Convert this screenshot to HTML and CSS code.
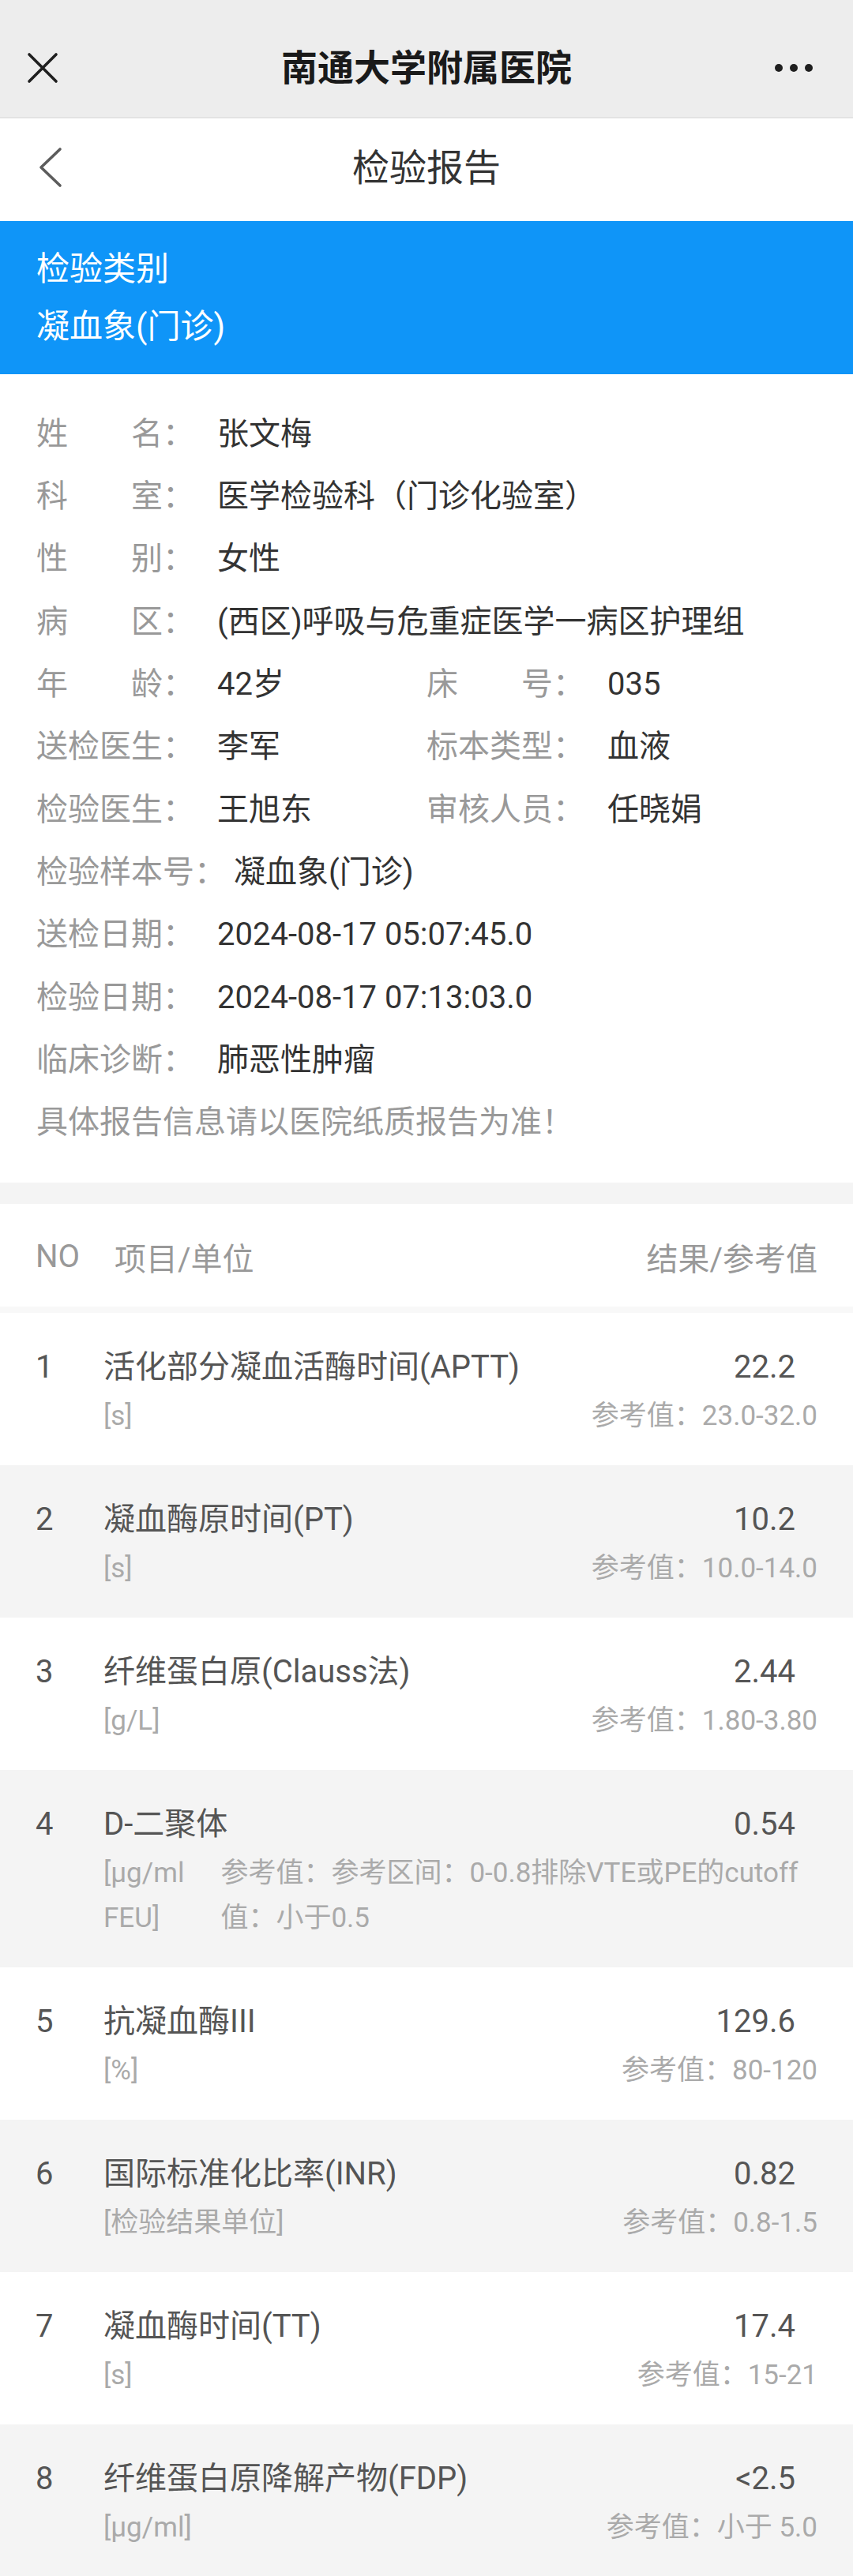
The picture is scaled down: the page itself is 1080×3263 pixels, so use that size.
FILE: index.html
```html
<!DOCTYPE html>
<html lang="zh-CN">
<head>
<meta charset="utf-8">
<title>检验报告</title>
<link rel="stylesheet" href="styles.css">
</head>
<body>
<header class="topbar">
  <span class="tb-left"><svg class="icon-close" width="40" height="40" viewBox="0 0 40 40"><path d="M3 3 L37 37 M37 3 L3 37"/></svg></span>
  <h1 class="tb-title">南通大学附属医院</h1>
  <span class="tb-right"><svg class="icon-more" width="50" height="12" viewBox="0 0 50 12"><circle cx="5" cy="6" r="5"/><circle cx="24" cy="6" r="5"/><circle cx="43" cy="6" r="5"/></svg></span>
</header>
<nav class="navbar">
  <span class="nav-back"><svg class="icon-back" width="30" height="52" viewBox="0 0 30 52"><polyline points="27,3 3,26 27,49"/></svg></span>
  <h2 class="nav-title">检验报告</h2>
  <span></span>
</nav>
<section class="category">
  <div>检验类别</div>
  <div>凝血象(门诊)</div>
</section>
<section class="info">
  <div class="info-row"><span class="lbl"><span class="just"><i>姓</i><i>名</i></span>：</span><span class="val">张文梅</span></div>
  <div class="info-row"><span class="lbl"><span class="just"><i>科</i><i>室</i></span>：</span><span class="val">医学检验科（门诊化验室）</span></div>
  <div class="info-row"><span class="lbl"><span class="just"><i>性</i><i>别</i></span>：</span><span class="val">女性</span></div>
  <div class="info-row"><span class="lbl"><span class="just"><i>病</i><i>区</i></span>：</span><span class="val">(西区)呼吸与危重症医学一病区护理组</span></div>
  <div class="info-row two">
    <div class="cell"><span class="lbl"><span class="just"><i>年</i><i>龄</i></span>：</span><span class="val">42岁</span></div>
    <div class="cell"><span class="lbl"><span class="just"><i>床</i><i>号</i></span>：</span><span class="val">035</span></div>
  </div>
  <div class="info-row two">
    <div class="cell"><span class="lbl">送检医生：</span><span class="val">李军</span></div>
    <div class="cell"><span class="lbl">标本类型：</span><span class="val">血液</span></div>
  </div>
  <div class="info-row two">
    <div class="cell"><span class="lbl">检验医生：</span><span class="val">王旭东</span></div>
    <div class="cell"><span class="lbl">审核人员：</span><span class="val">任晓娟</span></div>
  </div>
  <div class="info-row"><span class="lbl">检验样本号：</span><span class="val">凝血象(门诊)</span></div>
  <div class="info-row"><span class="lbl">送检日期：</span><span class="val">2024-08-17 05:07:45.0</span></div>
  <div class="info-row"><span class="lbl">检验日期：</span><span class="val">2024-08-17 07:13:03.0</span></div>
  <div class="info-row"><span class="lbl">临床诊断：</span><span class="val">肺恶性肿瘤</span></div>
  <div class="info-row note">具体报告信息请以医院纸质报告为准！</div>
</section>
<div class="sep"></div>
<section class="table">
  <div class="thead">
    <span class="th-no">NO</span>
    <span class="th-item">项目/单位</span>
    <span class="th-res">结果/参考值</span>
  </div>
  <div class="rows">
    <div class="trow">
      <div class="no">1</div>
      <div class="tbody">
        <div class="main"><span class="name">活化部分凝血活酶时间(APTT)</span><span class="result">22.2</span></div>
        <div class="sub"><span class="unit">[s]</span><span class="ref">参考值：23.0-32.0</span></div>
      </div>
    </div>
    <div class="trow">
      <div class="no">2</div>
      <div class="tbody">
        <div class="main"><span class="name">凝血酶原时间(PT)</span><span class="result">10.2</span></div>
        <div class="sub"><span class="unit">[s]</span><span class="ref">参考值：10.0-14.0</span></div>
      </div>
    </div>
    <div class="trow">
      <div class="no">3</div>
      <div class="tbody">
        <div class="main"><span class="name">纤维蛋白原(Clauss法)</span><span class="result">2.44</span></div>
        <div class="sub"><span class="unit">[g/L]</span><span class="ref">参考值：1.80-3.80</span></div>
      </div>
    </div>
    <div class="trow">
      <div class="no">4</div>
      <div class="tbody">
        <div class="main"><span class="name">D-二聚体</span><span class="result">0.54</span></div>
        <div class="sub wrap"><span class="unit">[μg/ml FEU]</span><span class="ref">参考值：参考区间：0-0.8排除VTE或PE的cutoff值：小于0.5</span></div>
      </div>
    </div>
    <div class="trow">
      <div class="no">5</div>
      <div class="tbody">
        <div class="main"><span class="name">抗凝血酶III</span><span class="result">129.6</span></div>
        <div class="sub"><span class="unit">[%]</span><span class="ref">参考值：80-120</span></div>
      </div>
    </div>
    <div class="trow">
      <div class="no">6</div>
      <div class="tbody">
        <div class="main"><span class="name">国际标准化比率(INR)</span><span class="result">0.82</span></div>
        <div class="sub"><span class="unit">[检验结果单位]</span><span class="ref">参考值：0.8-1.5</span></div>
      </div>
    </div>
    <div class="trow">
      <div class="no">7</div>
      <div class="tbody">
        <div class="main"><span class="name">凝血酶时间(TT)</span><span class="result">17.4</span></div>
        <div class="sub"><span class="unit">[s]</span><span class="ref">参考值：15-21</span></div>
      </div>
    </div>
    <div class="trow">
      <div class="no">8</div>
      <div class="tbody">
        <div class="main"><span class="name">纤维蛋白原降解产物(FDP)</span><span class="result">&lt;2.5</span></div>
        <div class="sub"><span class="unit">[μg/ml]</span><span class="ref">参考值：小于 5.0</span></div>
      </div>
    </div>
  </div>
</section>
</body>
</html>
```
FILE: styles.css
```css
* { box-sizing: border-box; margin: 0; padding: 0; }
html, body { background: #fff; }
body {
  width: 1080px;
  font-family: Roboto, "Noto Sans CJK SC", sans-serif;
  color: #333;
}
i { font-style: normal; }

/* top bar */
.topbar {
  display: grid;
  grid-template-columns: 1fr auto 1fr;
  align-items: center;
  height: 150px;
  padding-top: 24px;
  background: #ededed;
  border-bottom: 2px solid #e3e3e3;
}
.tb-left { display: flex; padding-left: 34px; }
.tb-title { font-size: 46px; font-weight: 700; color: #1a1a1a; line-height: 1; }
.tb-right { display: flex; justify-content: flex-end; padding-right: 49px; }
.icon-close path { fill: none; stroke: #1f1f1f; stroke-width: 3.6; stroke-linecap: round; }
.icon-more circle { fill: #1f1f1f; }

/* nav bar */
.navbar {
  display: grid;
  grid-template-columns: 1fr auto 1fr;
  align-items: center;
  height: 130px;
  padding-bottom: 6px;
  background: #fff;
}
.nav-back { display: flex; padding-left: 49px; }
.icon-back polyline { fill: none; stroke: #5c5c5c; stroke-width: 3.6; stroke-linecap: round; stroke-linejoin: round; }
.nav-title { font-size: 47px; font-weight: 400; color: #333; line-height: 1; }

/* category */
.category {
  height: 194px;
  padding: 24px 46px;
  background: #0f95f8;
  color: #fff;
  font-size: 42px;
  line-height: 73px;
}

/* info */
.info { padding: 36px 46px; font-size: 40px; }
.info-row { display: flex; align-items: center; height: 79.33px; line-height: 1.2; }
.info-row.two { display: grid; grid-template-columns: 1fr 1fr; }
.cell { display: flex; align-items: center; }
.lbl { flex: none; min-width: 219px; margin-right: 10px; color: #999; white-space: nowrap; }
.just { display: inline-flex; justify-content: space-between; width: 160px; }
.val { color: #333; white-space: nowrap; }
.note { color: #999; }

.sep { height: 27px; background: #f4f4f4; }

/* table */
.thead {
  display: flex;
  align-items: center;
  height: 138px;
  padding: 4px 45px 0;
  border-bottom: 8px solid #f8f8f8;
  font-size: 40px;
  color: #999;
}
.th-item { margin-left: 44px; }
.th-res { margin-left: auto; }

.trow { display: flex; padding: 38px 45px 34px; background: #fff; }
.trow:nth-child(even) { background: #f4f4f4; }
.no { flex: none; width: 86px; font-size: 40px; line-height: 62px; color: #555; }
.tbody { flex: 1; min-width: 0; }
.main { display: flex; justify-content: space-between; font-size: 40px; line-height: 62px; color: #555; }
.result { padding-right: 28px; }
.sub { display: flex; justify-content: space-between; margin-top: 2px; font-size: 35px; line-height: 57px; color: #aaa; }
.ref { margin-left: 52px; text-align: right; }
.sub.wrap .unit { flex: none; width: min-content; }
.sub.wrap .ref { flex: 1; margin-left: 46px; text-align: left; }
```
